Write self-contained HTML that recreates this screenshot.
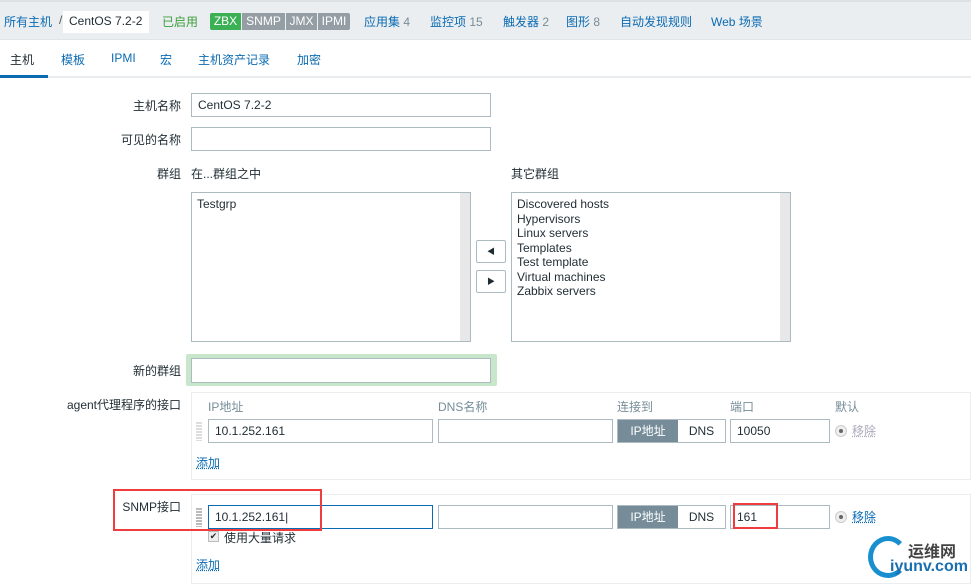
<!DOCTYPE html>
<html><head><meta charset="utf-8"><style>
*{margin:0;padding:0;box-sizing:border-box}
body{width:971px;height:582px;overflow:hidden;background:#fff;position:relative;font-family:"Liberation Sans","Noto Sans CJK SC",sans-serif;font-size:12px;color:#1f2c33}
.a{position:absolute;white-space:nowrap}
.l{color:#0a6bb3}
.g{color:#768d99}
.in{position:absolute;border:1px solid #acbbc2;background:#fff;height:24px;padding-left:6px;line-height:22px}
.lab{position:absolute;right:790px;white-space:nowrap}
.box{position:absolute;border:1px solid #ebeef0}
.u{text-decoration:underline dotted}
</style></head><body>
<div class="a" style="left:0;top:0;width:971px;height:40px;background:#ebeef0;border-bottom:1px solid #dfe4e7"></div>
<div class="a" style="top:0;left:0;width:971px;height:2px;background:#dde1e4"></div>
<div class="a l" style="left:4px;top:13px">所有主机</div>
<div class="a" style="left:59px;top:13px;color:#555">/</div>
<div class="a" style="left:63px;top:11px;width:86px;height:22px;background:#fff;padding:3px 0 0 6px;color:#1f2c33">CentOS 7.2-2</div>
<div class="a" style="left:162px;top:13px;color:#3c9e3c">已启用</div>
<div class="a" style="left:210px;top:13px;height:17px;line-height:17px;color:#fff;font-size:12px;border-radius:2px;overflow:hidden;display:flex">
<span style="background:#3cb054;width:31px;text-align:center">ZBX</span><span style="background:#949ea4;width:43px;text-align:center;margin-left:1px">SNMP</span><span style="background:#949ea4;width:31px;text-align:center;margin-left:1px">JMX</span><span style="background:#949ea4;width:32px;text-align:center;margin-left:1px">IPMI</span></div>
<div class="a l" style="left:364px;top:13px">应用集 <span class="g">4</span></div>
<div class="a l" style="left:430px;top:13px">监控项 <span class="g">15</span></div>
<div class="a l" style="left:503px;top:13px">触发器 <span class="g">2</span></div>
<div class="a l" style="left:566px;top:13px">图形 <span class="g">8</span></div>
<div class="a l" style="left:620px;top:13px">自动发现规则</div>
<div class="a l" style="left:711px;top:13px">Web 场景</div>

<div class="a" style="left:0;top:76px;width:971px;height:2px;background:#ebeef0"></div>
<div class="a" style="left:0;top:75px;width:48px;height:3px;background:#0a6bb3"></div>
<div class="a" style="left:10px;top:51px">主机</div>
<div class="a l" style="left:61px;top:51px">模板</div>
<div class="a l" style="left:111px;top:51px">IPMI</div>
<div class="a l" style="left:160px;top:51px">宏</div>
<div class="a l" style="left:198px;top:51px">主机资产记录</div>
<div class="a l" style="left:297px;top:51px">加密</div>

<div class="lab" style="top:97px">主机名称</div>
<div class="in" style="left:191px;top:93px;width:300px">CentOS 7.2-2</div>
<div class="lab" style="top:131px">可见的名称</div>
<div class="in" style="left:191px;top:127px;width:300px"></div>
<div class="lab" style="top:165px">群组</div>
<div class="a" style="left:191px;top:165px">在...群组之中</div>
<div class="a" style="left:511px;top:165px">其它群组</div>
<div class="a" style="left:191px;top:192px;width:280px;height:150px;border:1px solid #acbbc2;padding:4px 5px;line-height:14px">Testgrp<div style="position:absolute;right:0;top:0;width:10px;height:148px;background:#e8e8e8"></div></div>
<div class="a" style="left:511px;top:192px;width:280px;height:150px;border:1px solid #acbbc2;padding:4px 5px;line-height:14.5px">Discovered hosts<br>Hypervisors<br>Linux servers<br>Templates<br>Test template<br>Virtual machines<br>Zabbix servers<div style="position:absolute;right:0;top:0;width:10px;height:148px;background:#e8e8e8"></div></div>
<div class="a" style="left:476px;top:240px;width:30px;height:23px;border:1px solid #acbbc2;border-radius:2px;text-align:center;line-height:21px;font-size:8px">◀</div>
<div class="a" style="left:476px;top:270px;width:30px;height:23px;border:1px solid #acbbc2;border-radius:2px;text-align:center;line-height:21px;font-size:8px">▶</div>
<div class="lab" style="top:362px">新的群组</div>
<div class="a" style="left:186px;top:354px;width:311px;height:32px;background:#c8e6c9;border-radius:2px"></div>
<div class="in" style="left:191px;top:358px;width:300px;height:25px"></div>

<div class="lab" style="top:396px">agent代理程序的接口</div>
<div class="box" style="left:191px;top:392px;width:780px;height:88px"></div>
<div class="a g" style="left:208px;top:398px">IP地址</div>
<div class="a g" style="left:438px;top:398px">DNS名称</div>
<div class="a g" style="left:617px;top:398px">连接到</div>
<div class="a g" style="left:730px;top:398px">端口</div>
<div class="a g" style="left:835px;top:398px">默认</div>
<div class="a" style="left:196px;top:421px;width:6px;height:20px;background:repeating-linear-gradient(#fff 0 1px,#ddd 1px 3px)"></div>
<div class="in" style="left:208px;top:419px;width:225px">10.1.252.161</div>
<div class="in" style="left:438px;top:419px;width:175px"></div>
<div class="a" style="left:617px;top:419px;width:109px;height:24px;border:1px solid #acbbc2;display:flex;line-height:22px"><span style="background:#768d99;color:#fff;width:60px;text-align:center">IP地址</span><span style="flex:1;text-align:center">DNS</span></div>
<div class="in" style="left:730px;top:419px;width:100px">10050</div>
<div class="a" style="left:835px;top:425px;width:12px;height:12px;border-radius:50%;border:1px solid #ccc;background:#eee"><div style="margin:3px;width:4px;height:4px;border-radius:50%;background:#666"></div></div>
<div class="a u" style="left:852px;top:422px;color:#aab">移除</div>
<div class="a l u" style="left:196px;top:454px">添加</div>

<div class="lab" style="top:498px">SNMP接口</div>
<div class="box" style="left:191px;top:494px;width:780px;height:90px"></div>
<div class="a" style="left:196px;top:507px;width:6px;height:20px;background:repeating-linear-gradient(#fff 0 1px,#bbb 1px 3px)"></div>
<div class="in" style="left:208px;top:505px;width:225px;border-color:#0a6bb3">10.1.252.161|</div>
<div class="in" style="left:438px;top:505px;width:175px"></div>
<div class="a" style="left:617px;top:505px;width:109px;height:24px;border:1px solid #acbbc2;display:flex;line-height:22px"><span style="background:#768d99;color:#fff;width:60px;text-align:center">IP地址</span><span style="flex:1;text-align:center">DNS</span></div>
<div class="in" style="left:730px;top:505px;width:100px">161</div>
<div class="a" style="left:835px;top:511px;width:12px;height:12px;border-radius:50%;border:1px solid #ccc;background:#eee"><div style="margin:3px;width:4px;height:4px;border-radius:50%;background:#666"></div></div>
<div class="a l u" style="left:852px;top:508px">移除</div>
<div class="a" style="left:208px;top:531px;width:11px;height:11px;border:1px solid #bbb;background:#eee;font-size:9px;line-height:9px;text-align:center">✔</div>
<div class="a" style="left:224px;top:529px">使用大量请求</div>
<div class="a l u" style="left:196px;top:556px">添加</div>

<div class="a" style="left:113px;top:489px;width:209px;height:42px;border:2px solid #f03c3c"></div>
<div class="a" style="left:733px;top:503px;width:45px;height:26px;border:2px solid #f03c3c"></div>

<div class="a" style="left:868px;top:536px;width:40px;height:42px;border-radius:50%;border:5px solid #1a8fd0;border-right-color:transparent"></div>
<div class="a" style="left:908px;top:538px;font-size:16px;font-weight:bold;color:#444">运维网</div>
<div class="a" style="left:890px;top:558px;font-size:16px;font-weight:bold;color:#1a6fb0">iyunv.com</div>
</body></html>
